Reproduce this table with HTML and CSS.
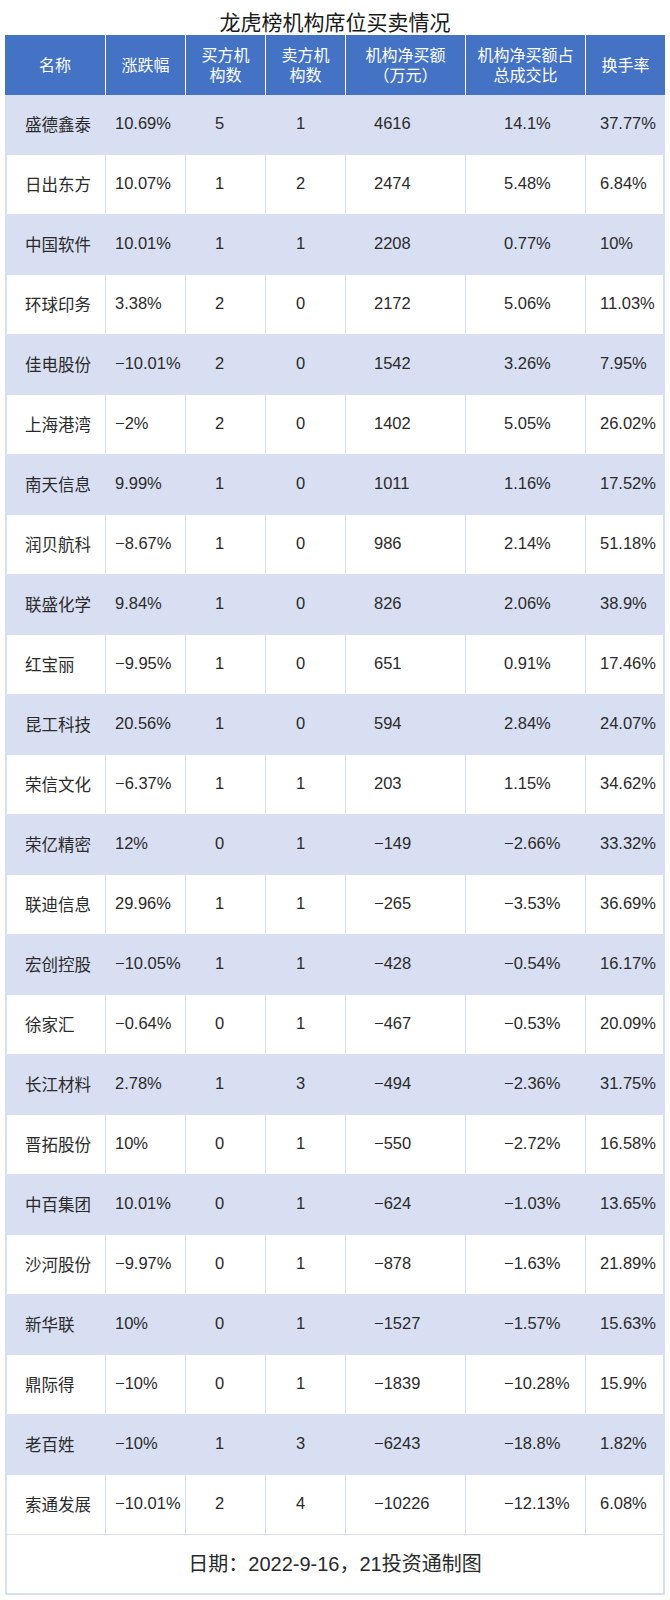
FILE: index.html
```html
<!DOCTYPE html>
<html lang="zh-CN">
<head>
<meta charset="utf-8">
<title>龙虎榜机构席位买卖情况</title>
<link rel="stylesheet" href="styles.css">
</head>
<body>
<div class="wrap">
  <h1 class="title">龙虎榜机构席位买卖情况</h1>
  <table class="grid">
    <colgroup>
      <col class="c1"><col class="c2"><col class="c3"><col class="c4"><col class="c5"><col class="c6"><col class="c7">
    </colgroup>
    <thead>
      <tr>
        <th>名称</th>
        <th>涨跌幅</th>
        <th>买方机<br>构数</th>
        <th>卖方机<br>构数</th>
        <th>机构净买额<br><span class="po">（</span>万元<span class="pc">）</span></th>
        <th>机构净买额占<br>总成交比</th>
        <th>换手率</th>
      </tr>
    </thead>
    <tbody>
      <tr><td>盛德鑫泰</td><td>10.69%</td><td>5</td><td>1</td><td>4616</td><td>14.1%</td><td>37.77%</td></tr>
      <tr><td>日出东方</td><td>10.07%</td><td>1</td><td>2</td><td>2474</td><td>5.48%</td><td>6.84%</td></tr>
      <tr><td>中国软件</td><td>10.01%</td><td>1</td><td>1</td><td>2208</td><td>0.77%</td><td>10%</td></tr>
      <tr><td>环球印务</td><td>3.38%</td><td>2</td><td>0</td><td>2172</td><td>5.06%</td><td>11.03%</td></tr>
      <tr><td>佳电股份</td><td>−10.01%</td><td>2</td><td>0</td><td>1542</td><td>3.26%</td><td>7.95%</td></tr>
      <tr><td>上海港湾</td><td>−2%</td><td>2</td><td>0</td><td>1402</td><td>5.05%</td><td>26.02%</td></tr>
      <tr><td>南天信息</td><td>9.99%</td><td>1</td><td>0</td><td>1011</td><td>1.16%</td><td>17.52%</td></tr>
      <tr><td>润贝航科</td><td>−8.67%</td><td>1</td><td>0</td><td>986</td><td>2.14%</td><td>51.18%</td></tr>
      <tr><td>联盛化学</td><td>9.84%</td><td>1</td><td>0</td><td>826</td><td>2.06%</td><td>38.9%</td></tr>
      <tr><td>红宝丽</td><td>−9.95%</td><td>1</td><td>0</td><td>651</td><td>0.91%</td><td>17.46%</td></tr>
      <tr><td>昆工科技</td><td>20.56%</td><td>1</td><td>0</td><td>594</td><td>2.84%</td><td>24.07%</td></tr>
      <tr><td>荣信文化</td><td>−6.37%</td><td>1</td><td>1</td><td>203</td><td>1.15%</td><td>34.62%</td></tr>
      <tr><td>荣亿精密</td><td>12%</td><td>0</td><td>1</td><td>−149</td><td>−2.66%</td><td>33.32%</td></tr>
      <tr><td>联迪信息</td><td>29.96%</td><td>1</td><td>1</td><td>−265</td><td>−3.53%</td><td>36.69%</td></tr>
      <tr><td>宏创控股</td><td>−10.05%</td><td>1</td><td>1</td><td>−428</td><td>−0.54%</td><td>16.17%</td></tr>
      <tr><td>徐家汇</td><td>−0.64%</td><td>0</td><td>1</td><td>−467</td><td>−0.53%</td><td>20.09%</td></tr>
      <tr><td>长江材料</td><td>2.78%</td><td>1</td><td>3</td><td>−494</td><td>−2.36%</td><td>31.75%</td></tr>
      <tr><td>晋拓股份</td><td>10%</td><td>0</td><td>1</td><td>−550</td><td>−2.72%</td><td>16.58%</td></tr>
      <tr><td>中百集团</td><td>10.01%</td><td>0</td><td>1</td><td>−624</td><td>−1.03%</td><td>13.65%</td></tr>
      <tr><td>沙河股份</td><td>−9.97%</td><td>0</td><td>1</td><td>−878</td><td>−1.63%</td><td>21.89%</td></tr>
      <tr><td>新华联</td><td>10%</td><td>0</td><td>1</td><td>−1527</td><td>−1.57%</td><td>15.63%</td></tr>
      <tr><td>鼎际得</td><td>−10%</td><td>0</td><td>1</td><td>−1839</td><td>−10.28%</td><td>15.9%</td></tr>
      <tr><td>老百姓</td><td>−10%</td><td>1</td><td>3</td><td>−6243</td><td>−18.8%</td><td>1.82%</td></tr>
      <tr><td>索通发展</td><td>−10.01%</td><td>2</td><td>4</td><td>−10226</td><td>−12.13%</td><td>6.08%</td></tr>
    </tbody>
    <tfoot>
      <tr><td colspan="7">日期：2022-9-16，21投资通制图</td></tr>
    </tfoot>
  </table>
</div>
</body>
</html>
```

FILE: styles.css
```css
html, body {
  margin: 0;
  padding: 0;
  background: #ffffff;
}

.wrap {
  width: 660px;
  padding: 0 5px;
  font-family: "Liberation Sans", "Noto Sans CJK SC", sans-serif;
}

.title {
  margin: 0;
  padding-top: 10px;
  height: 25px;
  line-height: 25px;
  font-size: 21px;
  font-weight: normal;
  color: #1a1a1a;
  text-align: center;
}

.grid {
  width: 660px;
  table-layout: fixed;
  border-collapse: separate;
  border-spacing: 0;
}

.c1 { width: 101px; }
.c2 { width: 80px; }
.c3 { width: 80px; }
.c4 { width: 80px; }
.c5 { width: 120px; }
.c6 { width: 120px; }
.c7 { width: 79px; }

.grid th {
  height: 60px;
  padding: 2px 0 0;
  box-sizing: border-box;
  background: #4472c4;
  color: #ffffff;
  font-size: 16px;
  font-weight: normal;
  line-height: 20px;
  text-align: center;
  vertical-align: middle;
  border-right: 1px solid #ffffff;
}

.grid th:last-child {
  border-right: none;
}

.po,
.pc {
  display: inline-block;
  width: 1em;
}

.po { text-align: left; }
.pc { text-align: right; }

.grid tbody td {
  height: 60px;
  box-sizing: border-box;
  padding: 0 0 2px;
  font-size: 16.5px;
  color: #2a2a2a;
  white-space: nowrap;
  vertical-align: middle;
  border-right: 1px solid #d9dff2;
  border-bottom: 1px solid #d9dff2;
}

.grid tbody tr:nth-child(odd) td {
  background: #d9dff2;
}

.grid tbody td:nth-child(1) { border-left: 2px solid #d9dff2; padding-left: 18px; }
.grid tbody td:nth-child(2) { padding-left: 9px; }
.grid tbody td:nth-child(3) { padding-left: 29px; }
.grid tbody td:nth-child(4) { padding-left: 30px; }
.grid tbody td:nth-child(5) { padding-left: 28px; }
.grid tbody td:nth-child(6) { padding-left: 38px; }
.grid tbody td:nth-child(7) { padding-left: 14px; border-right: 2px solid #d9dff2; }

.grid tfoot td {
  height: 60px;
  box-sizing: border-box;
  padding: 0 0 4px;
  font-size: 20px;
  color: #2a2a2a;
  text-align: center;
  vertical-align: middle;
  border-left: 2px solid #d9dff2;
  border-right: 2px solid #d9dff2;
  border-bottom: 2px solid #d9dff2;
}
```
